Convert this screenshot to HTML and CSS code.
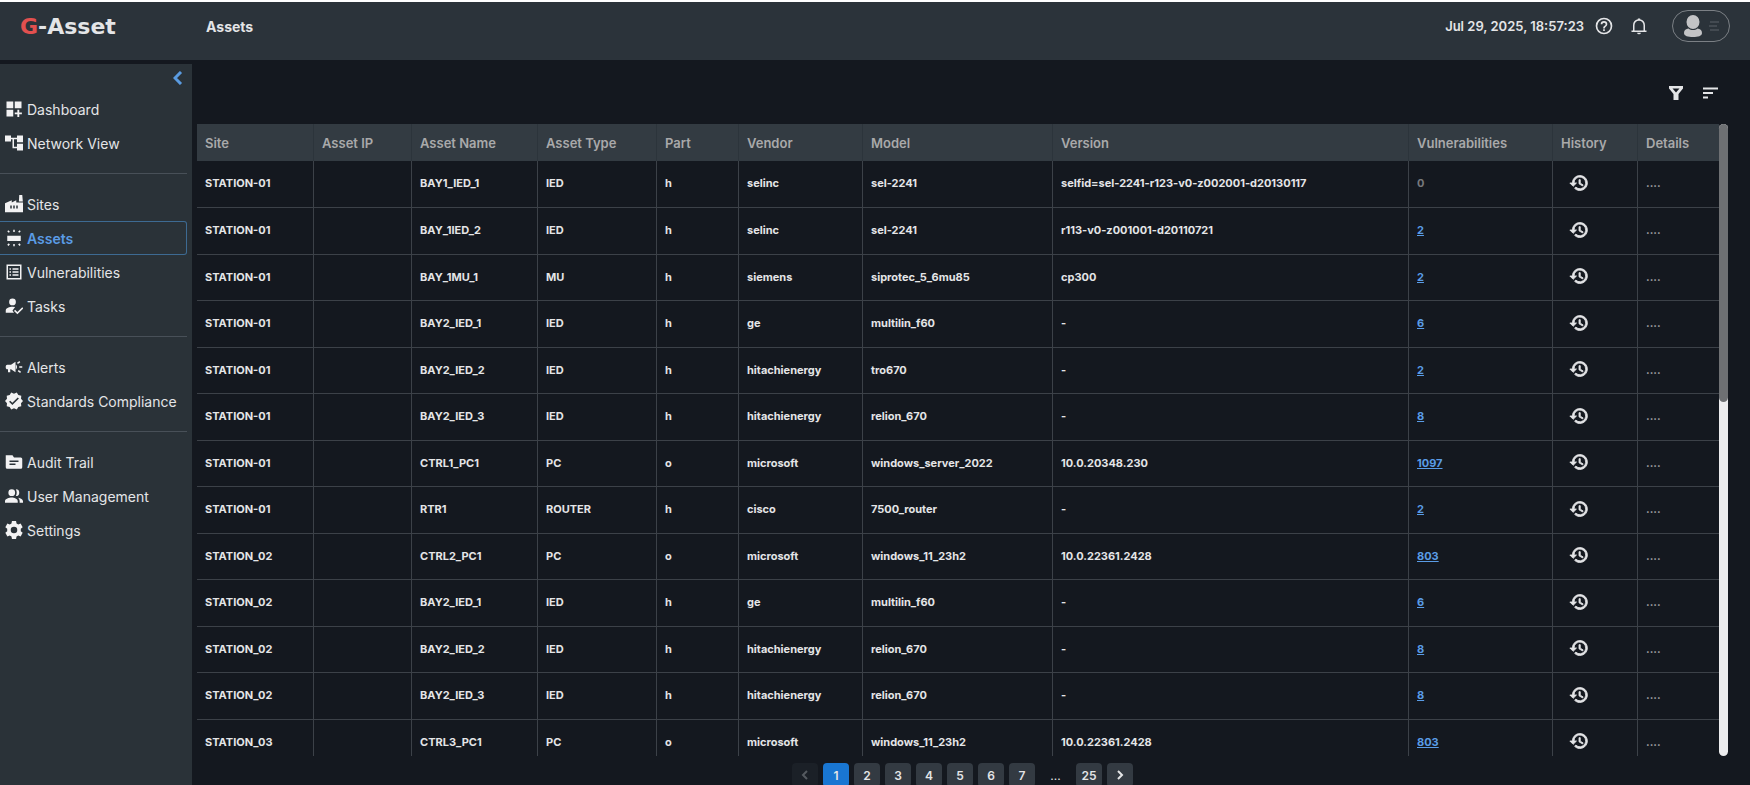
FILE: index.html
```html
<!DOCTYPE html>
<html lang="en">
<head>
  <meta charset="UTF-8" />
  <title>G-Asset - Assets</title>
  <meta name="viewport" content="width=device-width, initial-scale=1.0" />
  <link rel="stylesheet" href="styles.css">
</head>
<body>
  <svg class="sprite" aria-hidden="true">
    <symbol id="i-history" viewBox="0 0 24 24"><path d="M13 3a9 9 0 0 0-9 9H1l3.9 3.9.1.1L9 12H6a7 7 0 1 1 2.1 4.9l-1.4 1.5A9 9 0 1 0 13 3zm-1 5v5l4.3 2.5.7-1.2-3.500-2.100V8z"/></symbol>
  </svg>

  <header class="topbar">
    <div class="logo"><span>G</span>-Asset</div>
    <h1>Assets</h1>
    <div class="top-right">
      <time>Jul 29, 2025, 18:57:23</time>
      <button class="icon-btn help" aria-label="Help">
        <svg viewBox="0 0 24 24"><path d="M11 18h2v-2h-2v2zm1-16a10 10 0 1 0 0 20 10 10 0 0 0 0-20zm0 18a8 8 0 1 1 0-16 8 8 0 0 1 0 16zm0-14a4 4 0 0 0-4 4h2a2 2 0 1 1 4 0c0 2-3 1.750-3 5h2c0-2.250 3-2.500 3-5a4 4 0 0 0-4-4z"/></svg>
      </button>
      <button class="icon-btn bell" aria-label="Notifications">
        <svg viewBox="0 0 24 24"><path d="M9.500 21h5a2.500 2 0 0 1-5 0zM2 18h20v2H2zM4 18v-7c0-4 2.500-7.300 6.500-8V2h3v1c4 .7 6.500 4 6.500 8v7h-2v-7c0-3.500-2.500-6-6-6s-6 2.500-6 6v7z"/></svg>
      </button>
      <button class="profile" aria-label="Profile menu">
        <svg class="avatar" viewBox="0 0 20 22"><ellipse cx="10" cy="7" rx="6.500" ry="7"/><path d="M1 18c0-3 2-4 4.500-4.500 2.500 2 6.500 2 9 0C17 14 19 15 19 18c0 3-4 4-9 4s-9-1-9-4z"/></svg>
        <svg class="lines" viewBox="0 0 10 10"><path d="M1 1h9M0 5h8M1 9h9"/></svg>
      </button>
    </div>
  </header>

  <div class="layout">
    <aside class="sidebar">
      <button class="collapse" aria-label="Collapse menu">
        <svg viewBox="0 0 10 14"><path d="M8 1 2 7l6 6"/></svg>
      </button>
      <nav>
        <ul>
          <li><a href="#"><svg viewBox="0 0 24 24"><path d="M2 2h9v9H2zM13 2h9v9h-9zM2 13h9v9H2zM16.500 13h2.500v3.500h3.500V19H19v3.500h-2.500V19H13v-2.500h3.500z"/></svg>Dashboard</a></li>
          <li><a href="#"><svg viewBox="0 0 24 24"><path d="M24 11V2h-8v3H8V2H0v8h8V7h2v12h6v3h8v-9h-8v4h-4V7h4v4z"/></svg>Network View</a></li>
        </ul>
        <ul>
          <li><a href="#"><svg viewBox="0 0 24 24"><path fill-rule="evenodd" d="M24 23H0V11l9-4v3l6-3v3h9zM18.500 8.500 19 0h4l.8 8.500zM7 14v4h2v-4zm4 0v4h2v-4zm4 0v4h2v-4z"/></svg>Sites</a></li>
          <li class="active"><a href="#"><svg viewBox="0 0 24 24"><path d="M3 9h18v7H3zM11 1h2v3h-2zM11 20h2v3h-2zM3 3l1.500-1.500 2 2L5 5zM17.500 3.500l2-2L21 3l-2 2zM3 21l2-2 1.500 1.500-2 2zM17.500 20.500 19 19l2 2-1.500 1.500z"/></svg>Assets</a></li>
          <li><a href="#"><svg viewBox="0 0 24 24"><path fill-rule="evenodd" d="M2 2h20v20H2zM4 4v16h16V4zM6 7h2v2H6zM10 7h8v2h-8zM6 11h2v2H6zM10 11h8v2h-8zM6 15h2v2H6zM10 15h8v2h-8z"/></svg>Vulnerabilities</a></li>
          <li><a href="#"><svg viewBox="0 0 24 24"><path d="M10 11a4.500 4.500 0 1 0 0-9 4.500 4.500 0 0 0 0 9zM10 13c-4 0-9 1.500-9 5v3h11l-2-3 3.500-4.700zM23 13.500l-6.500 6.500-3-3-1.500 1.500 4.500 4.500 8-8z"/></svg>Tasks</a></li>
        </ul>
        <ul>
          <li><a href="#"><svg viewBox="0 0 24 24"><path d="M19 11h4v2h-4zM17 17.600l3.200 2.400 1.200-1.600-3.200-2.400zM20.400 5.600 19.200 4 16 6.400 17.200 8zM3 9a2 2 0 0 0-2 2v2c0 1.100.9 2 2 2h1v4h3v-4h1l6 4V5L8 9zM16 12c0-1.300-.6-2.500-1.500-3.300v6.600c.9-.8 1.500-2 1.500-3.300z"/></svg>Alerts</a></li>
          <li><a href="#"><svg viewBox="1 1 22 22"><path d="m23 12-2.440-2.780.34-3.680-3.610-.82-1.890-3.180L12 3 8.600 1.540 6.710 4.720l-3.610.81.34 3.680L1 12l2.440 2.780-.34 3.690 3.610.82 1.890 3.180L12 21l3.400 1.460 1.890-3.180 3.610-.82-.34-3.680zm-13 5-4-4 1.410-1.410L10 14.170l6.590-6.590L18 9z"/></svg>Standards Compliance</a></li>
        </ul>
        <ul>
          <li><a href="#"><svg viewBox="0 0 24 24"><path fill-rule="evenodd" d="M1 3h9l2 3h9a2 2 0 0 1 2 2v11a2 2 0 0 1-2 2H3a2 2 0 0 1-2-2zM6 10v2h12v-2zM6 14v2h8v-2z"/></svg>Audit Trail</a></li>
          <li><a href="#"><svg viewBox="0 0 24 24"><path d="M9 12a4.500 4.500 0 1 0 0-9 4.500 4.500 0 0 0 0 9zM9 14c-3.500 0-9 1.500-9 5v2h17v-2c0-3.500-5-5-8-5zM14.500 3a4.500 4.500 0 0 1 0 9c1.500-2.500 1.500-6 0-9zM17.500 14.300c3.500.7 6.500 2.200 6.500 4.700v2h-4.500v-2c0-2-.8-3.500-2-4.700z"/></svg>User Management</a></li>
          <li><a href="#"><svg viewBox="1 1 22 22"><path fill-rule="evenodd" d="M9.500 1h5l.6 3 2.100 1.200 2.900-1 2.500 4.300-2.300 2v3l2.300 2-2.500 4.300-2.900-1-2.100 1.200-.6 3h-5l-.6-3-2.100-1.200-2.900 1-2.500-4.300 2.300-2v-3l-2.300-2 2.500-4.300 2.900 1L8.900 4zM12 8a4 4 0 1 0 0 8 4 4 0 0 0 0-8z"/></svg>Settings</a></li>
        </ul>
      </nav>
    </aside>

    <main>
      <div class="toolbar">
        <button class="icon-btn" aria-label="Filter">
          <svg viewBox="0 0 18 18"><path fill-rule="evenodd" d="M2 2h14v2.500L11.500 10v6h-5v-6L2 4.500zM5.500 4.500 9 8.500l3.500-4z"/></svg>
        </button>
        <button class="icon-btn" aria-label="Sort">
          <svg viewBox="0 0 18 18"><path class="stroke" d="M2 4.500h15M2 9h10M2 13.500h5"/></svg>
        </button>
      </div>

      <div class="table-area">
        <div class="table-scroll">
          <table>
            <colgroup>
              <col class="c-site"><col class="c-ip"><col class="c-name"><col class="c-type"><col class="c-part"><col class="c-vendor"><col class="c-model"><col><col class="c-vuln"><col class="c-history"><col class="c-details">
            </colgroup>
            <thead>
              <tr>
                <th>Site</th><th>Asset IP</th><th>Asset Name</th><th>Asset Type</th><th>Part</th><th>Vendor</th><th>Model</th><th>Version</th><th>Vulnerabilities</th><th>History</th><th>Details</th>
              </tr>
            </thead>
            <tbody id="asset-rows"></tbody>
          </table>
        </div>
        <div class="scrollbar"><div class="thumb"></div></div>
      </div>

      <nav class="pagination" aria-label="Pages">
        <button disabled aria-label="Previous"><svg viewBox="0 0 8 10"><path d="M6 1 2 5l4 4"/></svg></button>
        <button class="current">1</button>
        <button>2</button>
        <button>3</button>
        <button>4</button>
        <button>5</button>
        <button>6</button>
        <button>7</button>
        <span>...</span>
        <button>25</button>
        <button aria-label="Next"><svg viewBox="0 0 8 10"><path d="m2 1 4 4-4 4"/></svg></button>
      </nav>
    </main>
  </div>

  <script>
    // site, name, type, part, vendor, model, version, vulnerabilities
    const assets = [
      ['STATION-01', 'BAY1_IED_1', 'IED', 'h', 'selinc', 'sel-2241', 'selfid=sel-2241-r123-v0-z002001-d20130117', 0],
      ['STATION-01', 'BAY_1IED_2', 'IED', 'h', 'selinc', 'sel-2241', 'r113-v0-z001001-d20110721', 2],
      ['STATION-01', 'BAY_1MU_1', 'MU', 'h', 'siemens', 'siprotec_5_6mu85', 'cp300', 2],
      ['STATION-01', 'BAY2_IED_1', 'IED', 'h', 'ge', 'multilin_f60', '-', 6],
      ['STATION-01', 'BAY2_IED_2', 'IED', 'h', 'hitachienergy', 'tro670', '-', 2],
      ['STATION-01', 'BAY2_IED_3', 'IED', 'h', 'hitachienergy', 'relion_670', '-', 8],
      ['STATION-01', 'CTRL1_PC1', 'PC', 'o', 'microsoft', 'windows_server_2022', '10.0.20348.230', 1097],
      ['STATION-01', 'RTR1', 'ROUTER', 'h', 'cisco', '7500_router', '-', 2],
      ['STATION_02', 'CTRL2_PC1', 'PC', 'o', 'microsoft', 'windows_11_23h2', '10.0.22361.2428', 803],
      ['STATION_02', 'BAY2_IED_1', 'IED', 'h', 'ge', 'multilin_f60', '-', 6],
      ['STATION_02', 'BAY2_IED_2', 'IED', 'h', 'hitachienergy', 'relion_670', '-', 8],
      ['STATION_02', 'BAY2_IED_3', 'IED', 'h', 'hitachienergy', 'relion_670', '-', 8],
      ['STATION_03', 'CTRL3_PC1', 'PC', 'o', 'microsoft', 'windows_11_23h2', '10.0.22361.2428', 803]
    ];

    function renderRows() {
      const body = document.getElementById('asset-rows');
      assets.forEach(([site, name, type, part, vendor, model, version, vulns]) => {
        const row = document.createElement('tr');
        const count = vulns ? `<a href="#">${vulns}</a>` : '<span class="none">0</span>';
        row.innerHTML = `
          <td>${site}</td>
          <td></td>
          <td>${name}</td>
          <td>${type}</td>
          <td>${part}</td>
          <td>${vendor}</td>
          <td>${model}</td>
          <td>${version}</td>
          <td class="vulns">${count}</td>
          <td class="history"><button class="icon-btn" aria-label="History of ${name}"><svg><use href="#i-history"/></svg></button></td>
          <td class="details">....</td>
        `;
        body.appendChild(row);
      });
    }

    renderRows();
  </script>
</body>
</html>
```
FILE: styles.css
```css
* {
  box-sizing: border-box;
}
body {
  font-family: Inter, 'Liberation Sans', sans-serif;
  margin: 0;
  height: 100vh;
  overflow: hidden;
  display: flex;
  flex-direction: column;
  background-color: #14181f;
  color: #e4e5e7;
  border-top: 2px solid #fff;
}
button {
  font-family: inherit;
  border: none;
  padding: 0;
  background: none;
  color: inherit;
  cursor: pointer;
}
svg {
  display: block;
  fill: currentColor;
}
.sprite {
  display: none;
}
.stroke {
  fill: none;
  stroke: currentColor;
  stroke-width: 2;
}

/* top bar */
.topbar {
  flex: none;
  height: 58px;
  padding: 0 20px 10px;
  display: flex;
  align-items: center;
  background-color: #2b333a;
}
.logo {
  width: 186px;
  font-family: 'DejaVu Sans', sans-serif;
  font-size: 22px;
  font-weight: 700;
}
.logo span {
  color: #e2504f;
}
.topbar h1 {
  margin: 0;
  font-size: 14px;
  font-weight: 700;
}
.top-right {
  margin-left: auto;
  display: flex;
  align-items: center;
}
.top-right time {
  font-size: 13px;
  font-weight: 600;
}
.help svg {
  width: 20px;
  height: 20px;
}
.bell svg {
  width: 18px;
  height: 20px;
}
.help {
  margin-left: 10px;
}
.bell {
  margin-left: 16px;
}
.profile {
  width: 58px;
  height: 32px;
  margin-left: 24px;
  padding: 0 10px;
  display: flex;
  align-items: center;
  justify-content: space-between;
  border: 1px solid #7b8085;
  border-radius: 16px;
}
.avatar {
  width: 20px;
  height: 22px;
  fill: #c3c4c6;
}
.lines {
  width: 10px;
  height: 10px;
  stroke: #5d6369;
}

.layout {
  flex: 1;
  min-height: 0;
  display: flex;
}

/* sidebar */
.sidebar {
  flex: none;
  width: 192px;
  margin-top: 4px;
  display: flex;
  flex-direction: column;
  background-color: #2a3238;
}
.collapse {
  align-self: flex-end;
  height: 28px;
  padding: 0 9px;
}
.collapse svg {
  width: 10px;
  height: 14px;
  fill: none;
  stroke: #5a9be0;
  stroke-width: 3;
}
.sidebar ul {
  list-style: none;
  margin: 0 5px 0 0;
  padding: 0;
}
.sidebar ul + ul {
  margin-top: 13px;
  padding-top: 13px;
  border-top: 1px solid #485058;
}
.sidebar a {
  height: 34px;
  padding-left: 5px;
  display: flex;
  align-items: center;
  gap: 4px;
  color: #e4e5e7;
  font-size: 14px;
  text-decoration: none;
  white-space: nowrap;
}
.sidebar a svg {
  width: 18px;
  height: 18px;
  fill: #f2f2f3;
}
.sidebar .active a {
  border: 1px solid #3d6a92;
  border-left: none;
  border-radius: 0 3px 3px 0;
  color: #5a9ce6;
  font-weight: 600;
}

/* main area */
main {
  flex: 1;
  min-width: 0;
  padding: 0 22px 0 5px;
  display: flex;
  flex-direction: column;
}
.toolbar {
  flex: none;
  height: 64px;
  padding: 2px 9px 0 0;
  display: flex;
  align-items: center;
  justify-content: flex-end;
  gap: 16px;
}
.toolbar svg {
  width: 18px;
  height: 18px;
}
.table-area {
  flex: 1;
  min-height: 0;
  display: flex;
}
.table-scroll {
  flex: 1;
  overflow: hidden;
}
.scrollbar {
  width: 9px;
  border-radius: 5px;
  background-color: #ececee;
}
.thumb {
  height: 44%;
  border-radius: 5px;
  background-color: #6e7073;
}
table {
  width: 100%;
  table-layout: fixed;
  border-collapse: separate;
  border-spacing: 0;
}
.c-site { width: 117px; }
.c-ip { width: 98px; }
.c-name { width: 126px; }
.c-type { width: 119px; }
.c-part { width: 82px; }
.c-vendor { width: 124px; }
.c-model { width: 190px; }
.c-vuln { width: 144px; }
.c-history { width: 85px; }
.c-details { width: 81px; }
th,
td {
  padding: 0 8px;
  text-align: left;
  white-space: nowrap;
  border-right: 1px solid #3c4148;
}
th:last-child,
td:last-child {
  border-right: none;
}
th {
  height: 37px;
  background-color: #333b42;
  border-right-color: #2c343b;
  color: #a9a9aa;
  font-size: 13px;
  font-weight: 600;
}
td {
  height: 47px;
  padding-bottom: 2px;
  border-bottom: 1px solid #3c4148;
  font-size: 11px;
  font-weight: 700;
}
tr:nth-child(odd) td {
  height: 46px;
}
tr:first-child td {
  height: 47px;
}
.vulns a {
  color: #5a9ce6;
}
.vulns .none {
  color: #77797d;
}
td.history {
  padding-left: 16px;
  padding-bottom: 0;
}
.history svg {
  width: 20px;
  height: 20px;
  stroke: currentColor;
  stroke-width: 1px;
}
.details {
  color: #a4a6a9;
}

/* pagination */
.pagination {
  flex: none;
  height: 29px;
  padding-top: 7px;
  display: flex;
  justify-content: center;
  gap: 5px;
}
.pagination button {
  flex: none;
  width: 26px;
  height: 24px;
  display: flex;
  align-items: center;
  justify-content: center;
  border-radius: 4px;
  background-color: #333a42;
  font-size: 12px;
  font-weight: 600;
}
.pagination .current {
  background-color: #1976d2;
}
.pagination button:disabled {
  background-color: #1b2027;
  color: #555a60;
}
.pagination svg {
  width: 8px;
  height: 10px;
  fill: none;
  stroke: currentColor;
  stroke-width: 2;
}
.pagination span {
  width: 31px;
  text-align: center;
  font-size: 12px;
  line-height: 26px;
}
```
